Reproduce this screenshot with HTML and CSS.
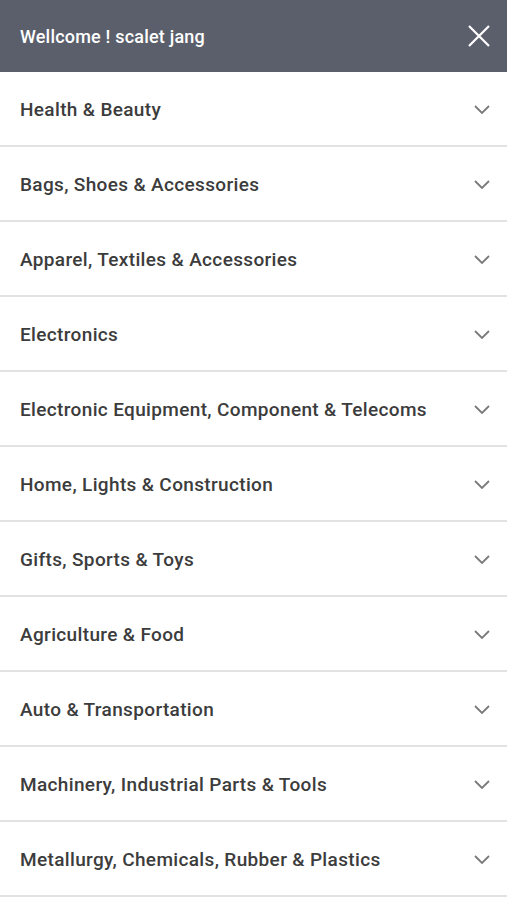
FILE: index.html
```html
<!DOCTYPE html>
<html lang="en">
<head>
    <meta charset="UTF-8">
    <meta name="viewport" content="width=device-width, initial-scale=1.0">
    <title>Categories</title>
    <link rel="stylesheet" href="styles.css">
</head>
<body>
  <div class="drawer">
    <div class="drawer-header">
        <span class="welcome">Wellcome ! scalet jang</span>
        <button class="close-btn" aria-label="Close">
            <svg width="22" height="22" viewBox="0 0 22 22"><path d="M1 1L21 21M21 1L1 21" stroke="#fff" stroke-width="2.2" fill="none"/></svg>
        </button>
    </div>
    <ul class="menu">
        <li class="menu-item"><span>Health &amp; Beauty</span><svg class="chevron" width="16" height="9" viewBox="0 0 16 9"><path d="M1 1L8 8L15 1" stroke="#7a7a7a" stroke-width="1.8" fill="none"/></svg></li>
        <li class="menu-item"><span>Bags, Shoes &amp; Accessories</span><svg class="chevron" width="16" height="9" viewBox="0 0 16 9"><path d="M1 1L8 8L15 1" stroke="#7a7a7a" stroke-width="1.8" fill="none"/></svg></li>
        <li class="menu-item"><span>Apparel, Textiles &amp; Accessories</span><svg class="chevron" width="16" height="9" viewBox="0 0 16 9"><path d="M1 1L8 8L15 1" stroke="#7a7a7a" stroke-width="1.8" fill="none"/></svg></li>
        <li class="menu-item"><span>Electronics</span><svg class="chevron" width="16" height="9" viewBox="0 0 16 9"><path d="M1 1L8 8L15 1" stroke="#7a7a7a" stroke-width="1.8" fill="none"/></svg></li>
        <li class="menu-item"><span>Electronic Equipment, Component &amp; Telecoms</span><svg class="chevron" width="16" height="9" viewBox="0 0 16 9"><path d="M1 1L8 8L15 1" stroke="#7a7a7a" stroke-width="1.8" fill="none"/></svg></li>
        <li class="menu-item"><span>Home, Lights &amp; Construction</span><svg class="chevron" width="16" height="9" viewBox="0 0 16 9"><path d="M1 1L8 8L15 1" stroke="#7a7a7a" stroke-width="1.8" fill="none"/></svg></li>
        <li class="menu-item"><span>Gifts, Sports &amp; Toys</span><svg class="chevron" width="16" height="9" viewBox="0 0 16 9"><path d="M1 1L8 8L15 1" stroke="#7a7a7a" stroke-width="1.8" fill="none"/></svg></li>
        <li class="menu-item"><span>Agriculture &amp; Food</span><svg class="chevron" width="16" height="9" viewBox="0 0 16 9"><path d="M1 1L8 8L15 1" stroke="#7a7a7a" stroke-width="1.8" fill="none"/></svg></li>
        <li class="menu-item"><span>Auto &amp; Transportation</span><svg class="chevron" width="16" height="9" viewBox="0 0 16 9"><path d="M1 1L8 8L15 1" stroke="#7a7a7a" stroke-width="1.8" fill="none"/></svg></li>
        <li class="menu-item"><span>Machinery, Industrial Parts &amp; Tools</span><svg class="chevron" width="16" height="9" viewBox="0 0 16 9"><path d="M1 1L8 8L15 1" stroke="#7a7a7a" stroke-width="1.8" fill="none"/></svg></li>
        <li class="menu-item"><span>Metallurgy, Chemicals, Rubber &amp; Plastics</span><svg class="chevron" width="16" height="9" viewBox="0 0 16 9"><path d="M1 1L8 8L15 1" stroke="#7a7a7a" stroke-width="1.8" fill="none"/></svg></li>
    </ul>
  </div>
</body>
</html>
```

FILE: styles.css
```css
body {
    font-family: Roboto, 'Noto Sans', sans-serif;
    background-color: #fff;
    margin: 0;
    padding: 0;
    color: #333;
}
.drawer {
    width: 100%;
}
.drawer-header {
    height: 72px;
    background-color: #5b5f6c;
    display: flex;
    align-items: center;
    justify-content: space-between;
    padding: 0 17px 0 20px;
    box-sizing: border-box;
}
.welcome {
    color: #fff;
    font-size: 18px;
    font-weight: 500;
    letter-spacing: 0.2px;
}
.close-btn {
    background: none;
    border: none;
    padding: 0;
    display: flex;
    cursor: pointer;
}
.menu {
    list-style: none;
    margin: 0;
    padding: 0;
}
.menu-item {
    height: 73px;
    border-bottom: 2px solid #e2e2e2;
    display: flex;
    align-items: center;
    justify-content: space-between;
    padding: 1px 17px 0 20px;
    box-sizing: content-box;
    height: 72px;
    font-size: 19px;
    font-weight: 500;
    letter-spacing: 0.35px;
    color: #3c3c3c;
}
.chevron {
    flex-shrink: 0;
}
```
